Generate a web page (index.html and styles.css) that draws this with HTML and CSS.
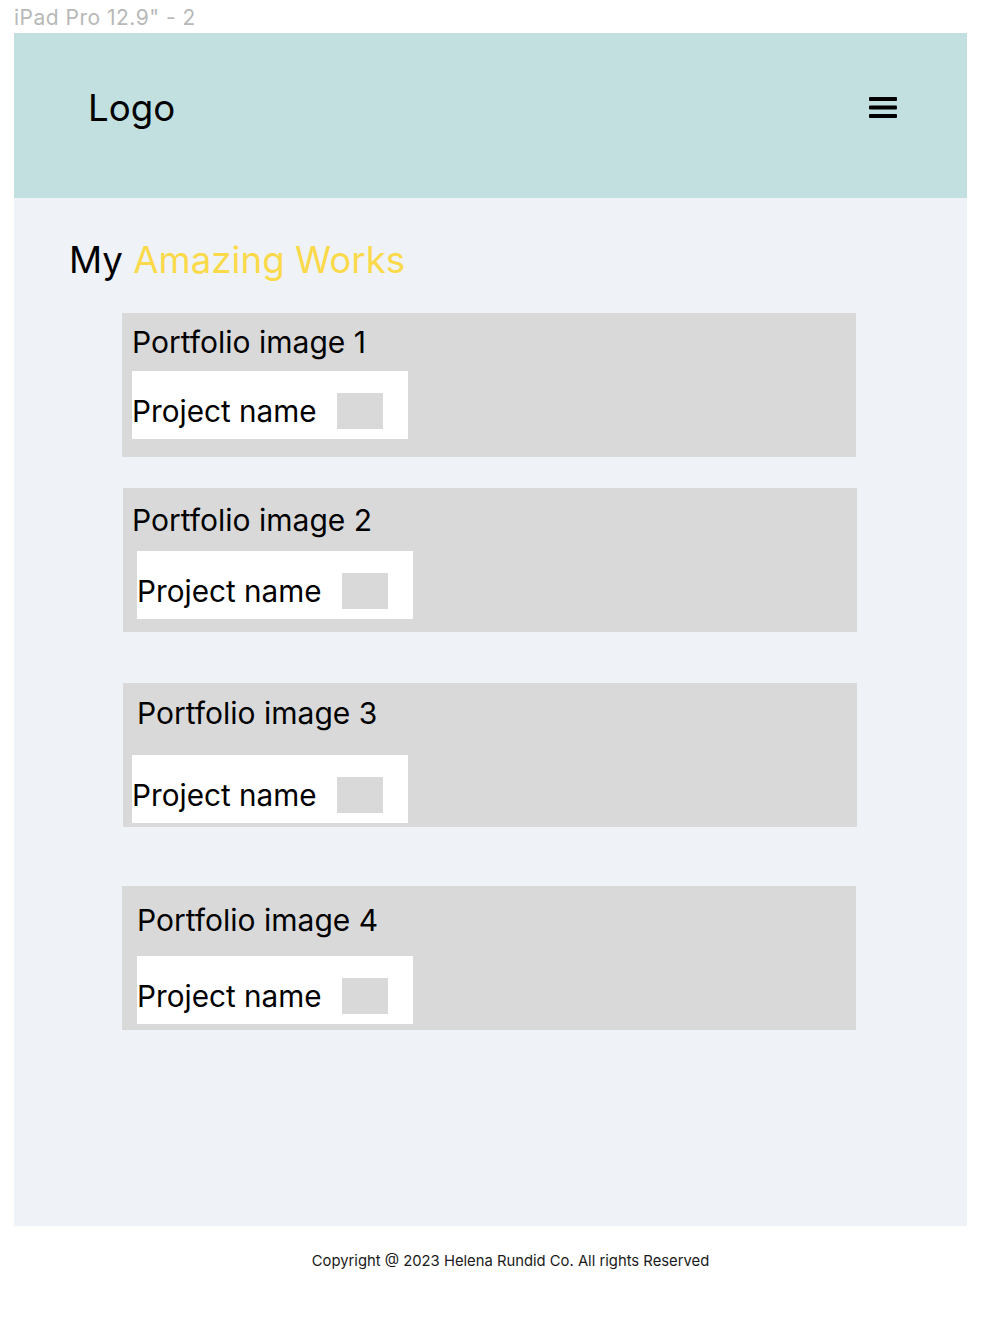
FILE: index.html
```html
<!DOCTYPE html>
<html lang="en">
<head>
<meta charset="utf-8">
<title>iPad Pro 12.9" - 2</title>
<link rel="stylesheet" href="styles.css">
</head>
<body>
  <div class="artboard-label">iPad Pro 12.9" - 2</div>
  <div class="frame">
    <header class="header">
      <div class="logo">Logo</div>
      <button class="menu-btn" aria-label="Menu">
        <svg width="28" height="21" viewBox="0 0 28 21" aria-hidden="true">
          <rect x="0" y="0" width="28" height="4" rx="1" fill="#000"/>
          <rect x="0" y="8.5" width="28" height="4" rx="1" fill="#000"/>
          <rect x="0" y="17" width="28" height="4" rx="1" fill="#000"/>
        </svg>
      </button>
    </header>
    <main class="main">
      <h1 class="heading">My <span class="accent">Amazing Works</span></h1>
      <section class="card card--1">
        <div class="card-title">Portfolio image 1</div>
        <div class="project">
          <span class="project-name">Project name</span>
          <span class="project-thumb"></span>
        </div>
      </section>
      <section class="card card--2">
        <div class="card-title">Portfolio image 2</div>
        <div class="project">
          <span class="project-name">Project name</span>
          <span class="project-thumb"></span>
        </div>
      </section>
      <section class="card card--3">
        <div class="card-title">Portfolio image 3</div>
        <div class="project">
          <span class="project-name">Project name</span>
          <span class="project-thumb"></span>
        </div>
      </section>
      <section class="card card--4">
        <div class="card-title">Portfolio image 4</div>
        <div class="project">
          <span class="project-name">Project name</span>
          <span class="project-thumb"></span>
        </div>
      </section>
    </main>
  </div>
  <footer class="footer">Copyright @ 2023 Helena Rundid Co. All rights Reserved</footer>
</body>
</html>
```

FILE: styles.css
```css
* {
  box-sizing: border-box;
}

html, body {
  margin: 0;
  padding: 0;
  background: #ffffff;
}

body {
  font-family: Inter, "Noto Sans", "Liberation Sans", sans-serif;
  color: #000;
  width: 984px;
}

.artboard-label {
  padding: 5px 0 0 14px;
  font-size: 21px;
  line-height: 25px;
  letter-spacing: 0.5px;
  height: 33px;
  color: #b8b8b8;
}

.frame {
  margin-left: 14px;
  width: 953px;
  height: 1193px;
  background: #eff3f8;
  display: flex;
  flex-direction: column;
}

.header {
  height: 165px;
  background: #c2e0e0;
  display: flex;
  justify-content: space-between;
  align-items: flex-start;
  padding: 52px 70px 0 74px;
}

.logo {
  font-size: 36.7px;
  line-height: 46px;
  font-weight: 400;
}

.menu-btn {
  margin-top: 12px;
  padding: 0;
  border: 0;
  background: none;
  width: 28px;
  height: 21px;
  display: block;
}

.menu-btn svg {
  display: block;
}

.main {
  padding: 39px 0 0 0;
  display: flex;
  flex-direction: column;
}

.heading {
  margin: 0 0 31px 55px;
  font-size: 36.7px;
  line-height: 45px;
  font-weight: 400;
}

.accent {
  color: #fad94a;
}

.card {
  width: 734px;
  height: 144px;
  background: #d9d9d9;
  margin-left: 108px;
}

.card-title {
  font-size: 30px;
  line-height: 36px;
}

.project {
  width: 276px;
  height: 68px;
  background: #ffffff;
  display: flex;
  align-items: center;
  padding-top: 11px;
}

.project-name {
  font-size: 29.7px;
  line-height: 36px;
}

.project-thumb {
  width: 46px;
  height: 36px;
  background: #d9d9d9;
  margin-left: auto;
  margin-right: 25px;
}

.card--1 {
  padding-top: 11px;
}
.card--1 .card-title { margin-left: 10px; }
.card--1 .project { margin: 11px 0 0 10px; }

.card--2 {
  margin-top: 31px;
  margin-left: 109px;
  padding-top: 14px;
}
.card--2 .card-title { margin-left: 9px; }
.card--2 .project { margin: 13px 0 0 14px; }

.card--3 {
  margin-top: 51px;
  margin-left: 109px;
  padding-top: 12px;
}
.card--3 .card-title { margin-left: 14px; }
.card--3 .project { margin: 24px 0 0 9px; }

.card--4 {
  margin-top: 59px;
  padding-top: 16px;
}
.card--4 .card-title { margin-left: 15px; }
.card--4 .project { margin: 18px 0 0 15px; }

.footer {
  padding: 26px 0 0 37px;
  text-align: center;
  font-size: 14.8px;
  line-height: 18px;
  color: #1a1a1a;
  height: 92px;
}
```
